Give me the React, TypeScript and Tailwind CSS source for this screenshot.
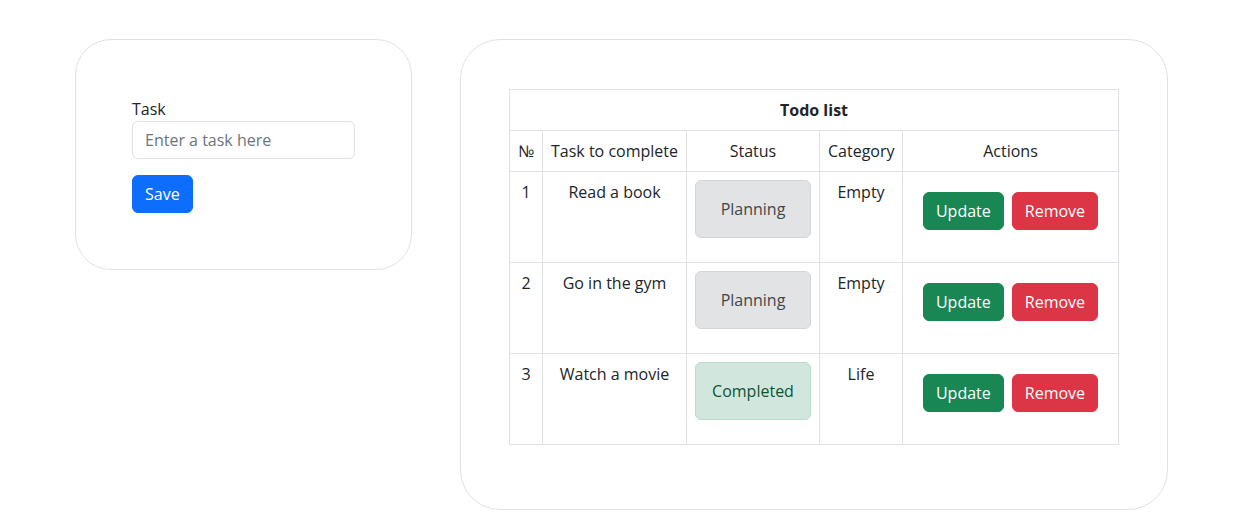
import { useState } from "react";

interface Todo {
  id: number;
  task: string;
  status: "Planning" | "Completed";
  category: string;
}

const todos: Todo[] = [
  { id: 1, task: "Read a book", status: "Planning", category: "Empty" },
  { id: 2, task: "Go in the gym", status: "Planning", category: "Empty" },
  { id: 3, task: "Watch a movie", status: "Completed", category: "Life" },
];

function StatusBox({ status }: { status: Todo["status"] }) {
  return status === "Completed" ? (
    <div className="mb-4 rounded-md border border-[#badbcc] bg-[#d1e7dd] p-4 text-center text-[#0f5132]">
      {status}
    </div>
  ) : (
    <div className="mb-4 rounded-md border border-[#d3d6d8] bg-[#e2e3e5] p-4 text-center text-[#41464b]">
      {status}
    </div>
  );
}

export default function App() {
  const [task, setTask] = useState("");

  return (
    <div
      className="flex min-h-[519px] items-start gap-[48px] bg-white pl-[75px] pt-[39px] text-base leading-6 text-[#212529]"
      style={{ fontFamily: '"Open Sans", "Noto Sans", sans-serif' }}
    >
      {/* form */}
      <div className="w-[337px] rounded-[36px] border border-[#dee2e6] px-14 pb-14 pt-[57px]">
        <label className="block">Task</label>
        <input
          className="block h-[38px] w-[223px] rounded-md border border-[#dee2e6] px-3 py-1.5 placeholder:text-[#6c757d] outline-none"
          placeholder="Enter a task here"
          value={task}
          onChange={(e) => setTask(e.target.value)}
        />
        <button className="mt-4 h-[38px] rounded-md border border-[#0d6efd] bg-[#0d6efd] px-3 text-white">Save</button>
      </div>

      {/* list */}
      <div className="w-[708px] rounded-[40px] border border-[#dee2e6] px-12 pb-12 pt-[49px]">
        <table className="mb-4 w-[609px] table-fixed border-collapse text-center">
          <colgroup>
            <col className="w-[33px]" />
            <col className="w-[144px]" />
            <col className="w-[133px]" />
            <col className="w-[83px]" />
            <col className="w-[216px]" />
          </colgroup>
          <tbody>
            <tr>
              <td colSpan={5} className="border border-[#dee2e6] p-2 font-bold">
                Todo list
              </td>
            </tr>
            <tr>
              <td className="border border-[#dee2e6] p-2">№</td>
              <td className="border border-[#dee2e6] p-2">Task to complete</td>
              <td className="border border-[#dee2e6] p-2">Status</td>
              <td className="border border-[#dee2e6] p-2">Category</td>
              <td className="border border-[#dee2e6] p-2">Actions</td>
            </tr>
            {todos.map((t) => (
              <tr key={t.id}>
                <td className="border border-[#dee2e6] p-2 align-top">{t.id}</td>
                <td className="border border-[#dee2e6] p-2 align-top">{t.task}</td>
                <td className="border border-[#dee2e6] p-2 align-top">
                  <StatusBox status={t.status} />
                </td>
                <td className="border border-[#dee2e6] p-2 align-top">{t.category}</td>
                <td className="border border-[#dee2e6] p-2 align-top">
                  <div className="mt-3 flex justify-center gap-2">
                    <button className="h-[38px] rounded-md border border-[#198754] bg-[#198754] px-3 text-white">
                      Update
                    </button>
                    <button className="h-[38px] rounded-md border border-[#dc3545] bg-[#dc3545] px-3 text-white">
                      Remove
                    </button>
                  </div>
                </td>
              </tr>
            ))}
          </tbody>
        </table>
      </div>
    </div>
  );
}
